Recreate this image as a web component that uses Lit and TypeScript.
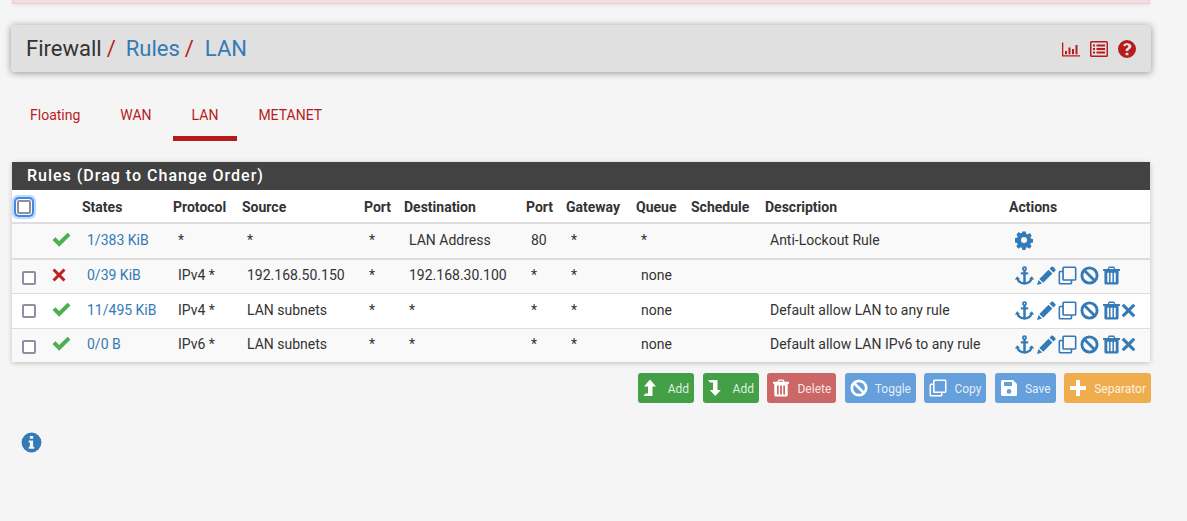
import { LitElement, html, css, svg } from 'lit';
import { customElement } from 'lit/decorators.js';

// all icons share an 18x18 box and paint with currentColor
const icons: Record<string, unknown> = {
  check: svg`<path d="M.5 9.500 3.200 6.800 6.800 10.400 14.800 2.500 17.500 5.200 6.800 15.800Z"/>`,
  cross: svg`<path d="M4.600 2.500 9 6.900 13.400 2.500 15.500 4.600 11.100 9 15.500 13.400 13.400 15.500 9 11.100 4.600 15.500 2.500 13.400 6.900 9 2.500 4.600Z"/>`,
  anchor: svg`<g fill="none" stroke="currentColor"><circle cx="9" cy="2.500" r="1.500" stroke-width="1.700"/><path d="M9 4V16" stroke-width="2.400"/><path d="M5.500 7H12.500" stroke-width="2"/><path d="M2.300 11.500Q3 16 9 16.600Q15 16 15.700 11.500" stroke-width="2.200"/></g><path d="M-.2 13 2 9.800 4.800 12.400ZM18.200 13 16 9.800 13.200 12.400Z"/>`,
  pencil: svg`<path d="M13.600 .8a1.200 1.200 0 0 1 1.700 0l2 2a1.200 1.200 0 0 1 0 1.700l-1.700 1.700-3.700-3.700ZM10.900 3.500 14.600 7.200 5.900 15.900 2.200 12.200ZM1.500 13.300 4.800 16.600 0 18Z"/>`,
  copy: svg`<path fill-rule="evenodd" d="M5.500 .5h10.500a1.500 1.500 0 0 1 1.500 1.500v10.500a1.500 1.500 0 0 1-1.500 1.500h-2.500v2a1.500 1.500 0 0 1-1.500 1.500H2a1.500 1.500 0 0 1-1.500-1.500V6A1.500 1.500 0 0 1 2 4.500h2V2A1.500 1.500 0 0 1 5.500 .5ZM5.600 2v10.200c0 .2 .1 .3 .3 .3H16V2.300c0-.2-.1-.3-.3-.3ZM4 6H2.300c-.2 0-.3 .1-.3 .3v9.400c0 .2 .1 .3 .3 .3H12v-2H5.500A1.500 1.500 0 0 1 4 12.500Z"/>`,
  ban: svg`<g fill="none" stroke="currentColor" stroke-width="2.700"><circle cx="9" cy="9" r="7.200"/><path d="M4 4 14 14"/></g>`,
  trash: svg`<path fill-rule="evenodd" d="M6.500 .5h5l1.200 2.300H17v2h-1.300v11.200a1.500 1.500 0 0 1-1.500 1.500H3.800a1.500 1.500 0 0 1-1.500-1.500V4.800H1v-2h4.300ZM7.100 1.800 6.700 2.800h4.600l-.4-1ZM5 6.500V15.500H6.700V6.500Zm3.100 0V15.500h1.800V6.500Zm3.200 0V15.500H13V6.500Z"/>`,
  cog: svg`<path fill-rule="evenodd" d="M7.300 .5h3.400l.4 2.300 1.300 .6 2-1.300 2.300 2.300-1.400 2 .6 1.300 2.100 .4v3.400l-2.200 .4-.6 1.300 1.400 2-2.400 2.400-2-1.400-1.300 .6-.4 2.100H7.300l-.4-2.200-1.300-.5-2 1.400-2.300-2.400 1.300-2-.5-1.300-2.100-.4V7.100l2.100-.4.600-1.300-1.300-2 2.300-2.300 1.900 1.300 1.400-.6ZM9 6a3 3 0 1 0 0 6 3 3 0 0 0 0-6Z" transform="scale(.95)"/>`,
  chart: svg`<path d="M0 2.500H1.300V15.200H18V16.500H0ZM3 11H5V14.200H3ZM6.500 7.500H8.500V14.200H6.500ZM10 9H12V14.200H10ZM13.500 5H15.500V14.200H13.500Z"/>`,
  list: svg`<path fill-rule="evenodd" d="M1.500 1h15A1.500 1.500 0 0 1 18 2.500v13a1.500 1.500 0 0 1-1.500 1.500h-15A1.500 1.500 0 0 1 0 15.500V2.500A1.500 1.500 0 0 1 1.500 1ZM1.500 2.500V15.500h15V2.500ZM3 4.600h2v2H3Zm3.500 0H15v2H6.500ZM3 8h2v2H3Zm3.500 0H15v2H6.500ZM3 11.400h2v2H3Zm3.500 0H15v2H6.500Z"/>`,
  help: svg`<path fill-rule="evenodd" d="M9 0a9 9 0 1 1 0 18A9 9 0 0 1 9 0ZM7.600 12.700v2.500h2.800v-2.500Zm1.500-9.700c-2 0-3.400 1-4.100 2.300l1.800 1.300c.5-.7 1.100-1.300 2.100-1.300.9 0 1.400 .4 1.400 1.100 0 .7-.5 1-1.300 1.500-1 .5-1.400 1.300-1.400 2.300v.8h2.800c0-1 .2-1.300 1-1.800 1-.6 2-1.400 2-2.900 0-2-2-3.100-4.300-3.100Z"/>`,
  info: svg`<path fill-rule="evenodd" d="M9 .5a8.500 8.500 0 1 1 0 17 8.500 8.500 0 0 1 0-17ZM7.600 3.400v2.400h2.800V3.400ZM6.600 7.300v1.600h1v3.700h-1v1.800h4.800v-1.800h-1V7.300Z"/>`,
  up: svg`<path d="M7 .5 13 7.500H9.500V17H.5L2.500 14.500H5V7.500H1Z"/>`,
  down: svg`<path d="M0 1H9.500V11H12.800L7.300 17 1.800 11H5V3.500H2Z"/>`,
  save: svg`<path fill-rule="evenodd" d="M2.500 1h10.500l4 4v10.500a1.500 1.500 0 0 1-1.500 1.500h-13A1.500 1.500 0 0 1 1 15.500V2.500A1.500 1.500 0 0 1 2.500 1Zm1.500 2v4h8V3ZM9 10a2.400 2.400 0 1 0 0 4.800A2.400 2.400 0 0 0 9 10Z"/>`,
  plus: svg`<path d="M7 1h4v6h6v4h-6v6H7v-6H1V7h6Z"/>`,
};

function icon(name: string, cls = '') {
  return html`<svg class="icon ${cls}" viewBox="0 0 18 18" fill="currentColor">${icons[name]}</svg>`;
}

const rules = [
  { id: 0, on: true, states: '1/383 KiB', proto: '*', source: '*', sport: '*', dest: 'LAN Address', dport: '80', gw: '*', queue: '*', desc: 'Anti-Lockout Rule', fixed: true },
  { id: 1, on: false, states: '0/39 KiB', proto: 'IPv4 *', source: '192.168.50.150', sport: '*', dest: '192.168.30.100', dport: '*', gw: '*', queue: 'none', desc: '' },
  { id: 2, on: true, states: '11/495 KiB', proto: 'IPv4 *', source: 'LAN subnets', sport: '*', dest: '*', dport: '*', gw: '*', queue: 'none', desc: 'Default allow LAN to any rule', removable: true },
  { id: 3, on: true, states: '0/0 B', proto: 'IPv6 *', source: 'LAN subnets', sport: '*', dest: '*', dport: '*', gw: '*', queue: 'none', desc: 'Default allow LAN IPv6 to any rule', removable: true },
];

const columnWidths = [35, 35, 91, 69, 122, 40, 122, 40, 70, 55, 74, 244, 141];

@customElement('app-root')
export class AppRoot extends LitElement {
  static styles = css`
    :host {
      display: block;
      min-height: 521px;
      background: #f5f5f5;
      font-family: Roboto, sans-serif;
      font-size: 14px;
      color: #333;
    }

    .page {
      display: flex;
      flex-direction: column;
      padding: 0 36px 0 12px;
    }

    .alert {
      height: 4px;
      background: #f2dede;
      border: 1px solid #ebccd1;
      border-top: 0;
      box-sizing: border-box;
      width: 1138px;
      box-shadow: 0 1px 4px rgba(0, 0, 0, 0.08);
    }

    .header {
      display: flex;
      align-items: center;
      justify-content: space-between;
      box-sizing: border-box;
      width: 1140px;
      height: 47px;
      margin: 21px 0 0 -1px;
      padding: 0 15px;
      background: #e0e0e0;
      border-radius: 3px;
      box-shadow: 0 1px 7px rgba(0, 0, 0, 0.4);
    }

    .crumbs {
      display: flex;
      font-size: 22px;
      line-height: 1;
    }

    .crumbs a {
      color: #337ab7;
    }

    .crumbs i {
      font-style: normal;
      color: #b71c1c;
      margin: 0 10px 0 5px;
    }

    .crumbs a + i {
      margin-right: 11px;
    }

    .tools {
      display: flex;
      align-items: center;
      gap: 10px;
      color: #b71c1c;
    }

    .icon {
      display: block;
      width: 18px;
      height: 18px;
    }

    .tabs {
      display: flex;
      gap: 4px;
      height: 41px;
      margin-top: 28px;
    }

    .tabs a {
      box-sizing: border-box;
      height: 41px;
      padding: 7px 18px 0;
      color: #b71c1c;
    }

    .tabs a.active {
      margin: 0 -1px;
      padding: 7px 19px 0;
      border-bottom: 5px solid #b71c1c;
    }

    .panel {
      width: 1138px;
      margin-top: 21px;
      background: #fff;
      box-shadow: 0 1px 5px rgba(0, 0, 0, 0.22);
    }

    .panel h2 {
      margin: 0;
      height: 28px;
      padding: 0 15px;
      background: #424242;
      color: #fff;
      font-size: 16px;
      font-weight: 500;
      line-height: 27px;
      letter-spacing: 1px;
    }

    table {
      width: 100%;
      border-collapse: separate;
      border-spacing: 0;
      table-layout: fixed;
    }

    th {
      height: 31px;
      padding: 1px 0 0;
      text-align: left;
      font-weight: 700;
      border-bottom: 2px solid #ddd;
      white-space: nowrap;
    }

    td {
      height: 31px;
      padding: 0 0 2px 5px;
      white-space: nowrap;
      border-bottom: 1px solid #ddd;
    }

    tbody tr {
      background: #f9f9f9;
    }

    tbody tr:nth-child(3) {
      background: #fff;
    }

    tbody tr:first-child td {
      height: 32px;
      border-bottom-width: 2px;
    }

    tbody tr:nth-child(2) td {
      height: 30px;
      padding-bottom: 3px;
    }

    tbody tr:nth-child(3) td {
      height: 32px;
    }

    tbody tr:last-child td {
      height: 30px;
      padding-bottom: 3px;
      border-bottom: 0;
    }

    tbody tr td.check-cell {
      padding: 2px 0 0 10px;
    }

    tbody tr:nth-child(3) td.check-cell {
      padding-top: 0;
    }

    .box {
      display: block;
      box-sizing: border-box;
      width: 14px;
      height: 14px;
      background: #fff;
      border: 2px solid #8f8fa3;
      border-radius: 2px;
    }

    th .box {
      margin-left: 5px;
      box-shadow: 0 0 0 1px #fff, 0 0 0 3px #4a86e0, 0 0 0 5px #bcdcfb;
    }

    .on {
      color: #4caf50;
    }

    .off {
      color: #c02020;
    }

    .on .icon {
      width: 19px;
      height: 19px;
      margin-top: -1px;
    }

    .off .icon {
      margin-left: -2px;
    }

    td a {
      color: #337ab7;
    }

    .actions {
      display: flex;
      gap: 2.7px;
      padding-left: 1px;
      color: #337ab7;
    }

    .actions .icon {
      width: 19px;
      height: 19px;
    }

    .actions .icon.remove {
      margin-left: -4.5px;
    }

    .buttons {
      display: flex;
      justify-content: flex-end;
      gap: 8.5px;
      width: 1139px;
      margin-top: 11px;
    }

    .btn {
      display: flex;
      align-items: center;
      justify-content: space-between;
      gap: 7px;
      box-sizing: border-box;
      height: 30px;
      padding: 1px 5px 0;
      border-radius: 3px;
      color: rgba(255, 255, 255, 0.85);
      font-size: 12px;
    }

    .green {
      background: #43a047;
    }

    .red {
      background: #cb6767;
    }

    .blue {
      background: #65a0dc;
    }

    .orange {
      background: #f0ad4e;
    }

    .btn .icon {
      color: #fff;
      margin-top: -1px;
    }

    .note {
      margin: 29px 0 0 9px;
      color: #337ab7;
    }

    .note .icon {
      width: 21px;
      height: 21px;
    }
  `;

  renderRow(r: (typeof rules)[number]) {
    return html`<tr>
      <td class="check-cell">${r.fixed ? '' : html`<span class="box"></span>`}</td>
      <td class=${r.on ? 'on' : 'off'}>${icon(r.on ? 'check' : 'cross')}</td>
      <td><a>${r.states}</a></td>
      <td>${r.proto}</td>
      <td>${r.source}</td>
      <td>${r.sport}</td>
      <td>${r.dest}</td>
      <td>${r.dport}</td>
      <td>${r.gw}</td>
      <td>${r.queue}</td>
      <td></td>
      <td>${r.desc}</td>
      <td>
        <div class="actions">
          ${r.fixed
            ? icon('cog')
            : html`${icon('anchor')}${icon('pencil')}${icon('copy')}${icon('ban')}${icon('trash')}${r.removable ? icon('cross', 'remove') : ''}`}
        </div>
      </td>
    </tr>`;
  }

  render() {
    return html`
      <div class="page">
        <div class="alert"></div>
        <div class="header">
          <div class="crumbs">
            <span>Firewall</span><i>/</i><a>Rules</a><i>/</i><a>LAN</a>
          </div>
          <div class="tools">${icon('chart')}${icon('list')}${icon('help')}</div>
        </div>
        <nav class="tabs">
          <a>Floating</a><a>WAN</a><a class="active">LAN</a><a>METANET</a>
        </nav>
        <section class="panel">
          <h2>Rules (Drag to Change Order)</h2>
          <table>
            <colgroup>
              ${columnWidths.map((w) => html`<col style="width: ${w}px" />`)}
            </colgroup>
            <thead>
              <tr>
                <th><span class="box"></span></th>
                <th></th>
                <th>States</th>
                <th>Protocol</th>
                <th>Source</th>
                <th>Port</th>
                <th>Destination</th>
                <th>Port</th>
                <th>Gateway</th>
                <th>Queue</th>
                <th>Schedule</th>
                <th>Description</th>
                <th>Actions</th>
              </tr>
            </thead>
            <tbody>${rules.map((r) => this.renderRow(r))}</tbody>
          </table>
        </section>
        <div class="buttons">
          <a class="btn green">${icon('up')}Add</a>
          <a class="btn green">${icon('down')}Add</a>
          <a class="btn red">${icon('trash')}Delete</a>
          <a class="btn blue">${icon('ban')}Toggle</a>
          <a class="btn blue">${icon('copy')}Copy</a>
          <a class="btn blue">${icon('save')}Save</a>
          <a class="btn orange">${icon('plus')}Separator</a>
        </div>
        <div class="note">${icon('info')}</div>
      </div>
    `;
  }
}
